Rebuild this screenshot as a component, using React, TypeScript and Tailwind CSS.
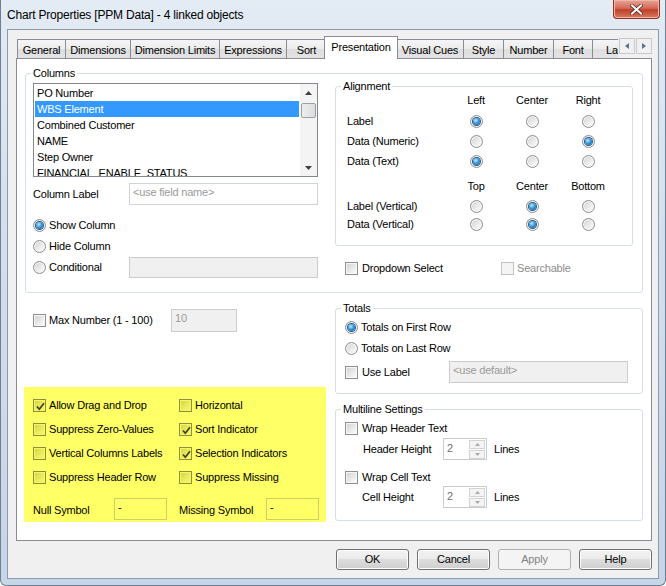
import React from "react";

type Tone = "plain" | "yellow" | "off";

function Radio({ on = false }: { on?: boolean }) {
  return (
    <span className="flex h-[13px] w-[13px] shrink-0 items-center justify-center rounded-full border border-[#8e8f8f] bg-[linear-gradient(135deg,#cfcfcf,#eeeeee_60%,#ffffff)] shadow-[inset_0_0_0_1px_#f6f6f6]">
      {on && (
        <span className="h-[7px] w-[7px] rounded-full bg-[radial-gradient(circle_at_40%_35%,#c4ecff,#3a9be0_45%,#0e4f8e)] shadow-[0_0_0_1px_#225a8a]" />
      )}
    </span>
  );
}

function Box({ on = false, tone = "plain" }: { on?: boolean; tone?: Tone }) {
  const look =
    tone === "yellow"
      ? "border-[#8f8f3e] bg-[linear-gradient(135deg,#d2d24e,#eded5c_60%,#fafa64)] shadow-[inset_0_0_0_1px_#f7f762]"
      : tone === "off"
      ? "border-[#c2c2c2] bg-[#f4f4f4]"
      : "border-[#8e8f8f] bg-[linear-gradient(135deg,#cfcfcf,#ececec_60%,#ffffff)] shadow-[inset_0_0_0_1px_#f6f6f6]";
  return (
    <span className={`relative flex h-[13px] w-[13px] shrink-0 items-center justify-center border ${look}`}>
      {on && (
        <svg width="11" height="11" viewBox="0 0 11 11" className="absolute left-px top-px">
          <path d="M2 5.5 L4.3 8.2 L9 2.2" fill="none" stroke={tone === "yellow" ? "#3e3e22" : "#4a5f7f"} strokeWidth="1.7" />
        </svg>
      )}
    </span>
  );
}

function Group({ title, className, children }: { title: string; className: string; children?: React.ReactNode }) {
  return (
    <fieldset className={`rounded-[3px] border border-[#d5dfe5] px-[5px] ${className}`}>
      <legend className="px-[2px] leading-[14px]">{title}</legend>
      {children}
    </fieldset>
  );
}

function Field({ w, text, hint = false, grey = false, yellow = false, h = "h-[22px]" }: { w: string; text?: string; hint?: boolean; grey?: boolean; yellow?: boolean; h?: string }) {
  const look = yellow ? "border-[#cfcf6a] bg-[#ffff66]" : grey ? "border-[#c9cdd2] bg-[#f0f0f0]" : "border-[#d0d4d9] bg-white";
  return (
    <div className={`${w} ${h} shrink-0 border ${look} pl-[3px] pt-[3px] ${hint || grey ? "text-[#9a9a9a]" : "text-black"}`}>
      {text}
    </div>
  );
}

function Spin() {
  return (
    <div className="flex h-[22px] w-[44px] shrink-0 border border-[#c9cdd2] bg-white">
      <span className="flex-1 pl-[3px] pt-[4px] text-[#707070]">2</span>
      <div className="mr-px mt-px flex w-[16px] flex-col gap-px">
        <span className="flex h-[9px] items-center justify-center border border-[#d4d4d4] bg-[#f4f4f4]">
          <svg width="5" height="3" viewBox="0 0 5 3"><path d="M0 3 L2.5 0 L5 3Z" fill="#a8a8a8" /></svg>
        </span>
        <span className="flex h-[9px] items-center justify-center border border-[#d4d4d4] bg-[#f4f4f4]">
          <svg width="5" height="3" viewBox="0 0 5 3"><path d="M0 0 L2.5 3 L5 0Z" fill="#a8a8a8" /></svg>
        </span>
      </div>
    </div>
  );
}

const tabs = [
  { label: "General", w: "w-[49px]" },
  { label: "Dimensions", w: "w-[66px]" },
  { label: "Dimension Limits", w: "w-[90px]" },
  { label: "Expressions", w: "w-[68px]" },
  { label: "Sort", w: "w-[41px]" },
  { label: "Presentation", w: "w-[74px]", active: true },
  { label: "Visual Cues", w: "w-[68px]" },
  { label: "Style", w: "w-[41px]" },
  { label: "Number", w: "w-[51px]" },
  { label: "Font", w: "w-[40px]" },
  { label: "Layout", w: "w-[60px]" },
];

const fields = ["PO Number", "WBS Element", "Combined Customer", "NAME", "Step Owner", "FINANCIAL_ENABLE_STATUS"];

const alignRows = [
  { label: "Label", pick: 0 },
  { label: "Data (Numeric)", pick: 2 },
  { label: "Data (Text)", pick: 0 },
];

const options = [
  ["Allow Drag and Drop", true, "Horizontal", false],
  ["Suppress Zero-Values", false, "Sort Indicator", true],
  ["Vertical Columns Labels", false, "Selection Indicators", true],
  ["Suppress Header Row", false, "Suppress Missing", false],
] as const;

export default function App() {
  return (
    <div className="flex h-[586px] w-[666px] flex-col overflow-hidden rounded-b-[6px] border-x border-b border-[#6f7e90] bg-[linear-gradient(180deg,#e3ebf4,#d3dfec_40%,#c6d5e7)] font-['Liberation_Sans',Arial,sans-serif] text-[11px] leading-none tracking-[-0.2px] text-black">
      {/* title bar */}
      <div className="flex h-[29px] shrink-0 items-start justify-between">
        <span className="pl-[6px] pt-[9px] text-[12px] tracking-[-0.2px]">Chart Properties [PPM Data] - 4 linked objects</span>
        <button className="mr-[5px] flex h-[19px] w-[47px] items-center justify-center rounded-b-[4px] border border-t-0 border-[#8b3326] bg-[linear-gradient(#e8a597,#d46b58_45%,#c0402c_55%,#d77a5e)] shadow-[inset_0_0_0_1px_#f0b7a8]">
          <svg width="13" height="11" viewBox="0 0 13 11">
            <path d="M2 1.5 L11 9.5 M11 1.5 L2 9.5" stroke="#5a2a22" strokeWidth="3.6" strokeLinecap="square" />
            <path d="M2 1.5 L11 9.5 M11 1.5 L2 9.5" stroke="#ffffff" strokeWidth="2" strokeLinecap="square" />
          </svg>
        </button>
      </div>

      {/* client area */}
      <div className="ml-[6px] flex h-[550px] w-[652px] flex-col border border-[#8b9bb0] bg-[#f0f0f0]">
        {/* tab strip */}
        <div className="mt-[6px] flex h-[22px] items-start">
          <div className="ml-[9px] flex h-[22px] w-[601px] items-end overflow-x-clip">
            {tabs.map((t) =>
              t.active ? (
                <div
                  key={t.label}
                  className={`${t.w} relative z-10 -mx-[2px] -mb-px flex h-[23px] shrink-0 justify-center border border-b-0 border-[#898c95] bg-white pt-[5px]`}
                >
                  {t.label}
                </div>
              ) : (
                <div
                  key={t.label}
                  className={`${t.w} flex h-[19px] shrink-0 justify-center border-l border-t border-r border-[#898c95] -mr-px bg-[linear-gradient(#f5f5f5,#ececec_50%,#dedede_50%,#e3e3e3)] pt-[5px]`}
                >
                  {t.label}
                </div>
              )
            )}
          </div>
          <div className="ml-px mt-[2px] flex gap-px">
            {["M4 0 L0 3 L4 6Z", "M0 0 L4 3 L0 6Z"].map((d) => (
              <span key={d} className="flex h-[16px] w-[16px] items-center justify-center border border-[#c6c9ce] bg-[#f0f0f0]">
                <svg width="4" height="6" viewBox="0 0 4 6"><path d={d} fill="#5d6f8a" /></svg>
              </span>
            ))}
          </div>
        </div>

        {/* tab page */}
        <div className="ml-[8px] h-[483px] w-[636px] border border-[#898c95] bg-white pl-[8px]">
          <Group title="Columns" className="mt-[7px] h-[227px] w-[618px]">
            <div className="flex">
              <div className="ml-[2px] w-[285px]">
                <div className="mt-[3px] flex h-[94px] w-[285px] border border-[#828790]">
                  <div className="flex-1 overflow-hidden p-px">
                    {fields.map((f) => (
                      <div
                        key={f}
                        className={`h-[16px] pl-[2px] leading-[16px] ${f === "WBS Element" ? "bg-[#3399ff] text-white" : ""}`}
                      >
                        {f}
                      </div>
                    ))}
                  </div>
                  <div className="flex w-[17px] flex-col items-center bg-[#f4f4f4]">
                    <span className="flex h-[17px] items-center">
                      <svg width="7" height="4" viewBox="0 0 7 4"><path d="M0 4 L3.5 0 L7 4Z" fill="#404040" /></svg>
                    </span>
                    <span className="mt-[2px] h-[15px] w-[15px] rounded-[2px] border border-[#9aa0a8] bg-[linear-gradient(90deg,#eeeeee,#dcdcdc)]" />
                    <span className="mt-auto flex h-[17px] items-center">
                      <svg width="7" height="4" viewBox="0 0 7 4"><path d="M0 0 L3.5 4 L7 0Z" fill="#404040" /></svg>
                    </span>
                  </div>
                </div>

                <div className="mt-[6px] flex h-[22px] items-center">
                  <span className="w-[96px]">Column Label</span>
                  <Field w="w-[189px]" text="<use field name>" hint />
                </div>

                <div className="mt-[10px] flex h-[21px] items-center gap-[3px]">
                  <Radio on />
                  <span>Show Column</span>
                </div>
                <div className="flex h-[21px] items-center gap-[3px]">
                  <Radio />
                  <span>Hide Column</span>
                </div>
                <div className="flex h-[21px] items-center">
                  <span className="flex w-[96px] items-center gap-[3px]">
                    <Radio />
                    <span>Conditional</span>
                  </span>
                  <Field w="w-[189px]" h="h-[21px]" grey />
                </div>
              </div>

              <div className="ml-[17px] w-[298px]">
                <Group title="Alignment" className="-mt-px h-[167px] w-[298px]">
                  <div className="grid h-[14px] grid-cols-[107px_56px_56px_56px] leading-[14px]">
                    <span />
                    <span className="text-center">Left</span>
                    <span className="text-center">Center</span>
                    <span className="text-center">Right</span>
                  </div>
                  <div className="mt-[4px]">
                    {alignRows.map((r) => (
                      <div key={r.label} className="grid h-[20px] grid-cols-[107px_56px_56px_56px] items-center">
                        <span className="pl-[6px]">{r.label}</span>
                        {[0, 1, 2].map((i) => (
                          <span key={i} className="flex justify-center">
                            <Radio on={r.pick === i} />
                          </span>
                        ))}
                      </div>
                    ))}
                  </div>
                  <div className="mt-[8px] grid h-[14px] grid-cols-[107px_56px_56px_56px] leading-[14px]">
                    <span />
                    <span className="text-center">Top</span>
                    <span className="text-center">Center</span>
                    <span className="text-center">Bottom</span>
                  </div>
                  <div className="mt-[4px] grid h-[19px] grid-cols-[107px_56px_56px_56px] items-center">
                    <span className="pl-[6px]">Label (Vertical)</span>
                    <span className="flex justify-center"><Radio /></span>
                    <span className="flex justify-center"><Radio on /></span>
                    <span className="flex justify-center"><Radio /></span>
                  </div>
                  <div className="grid h-[17px] grid-cols-[107px_56px_56px_56px] items-center">
                    <span className="pl-[6px]">Data (Vertical)</span>
                    <span className="flex justify-center"><Radio /></span>
                    <span className="flex justify-center"><Radio on /></span>
                    <span className="flex justify-center"><Radio /></span>
                  </div>
                </Group>

                <div className="mt-[14px] flex h-[17px] items-center pl-[10px]">
                  <span className="flex w-[156px] items-center gap-[4px]">
                    <Box />
                    <span>Dropdown Select</span>
                  </span>
                  <span className="flex items-center gap-[3px] text-[#8d8d8d]">
                    <Box tone="off" />
                    <span>Searchable</span>
                  </span>
                </div>
              </div>
            </div>
          </Group>

          <div className="mt-[8px] flex">
            {/* left column */}
            <div className="w-[310px]">
              <div className="mt-[8px] flex h-[23px] items-center pl-[8px]">
                <span className="flex w-[138px] items-center gap-[3px]">
                  <Box />
                  <span>Max Number (1 - 100)</span>
                </span>
                <Field w="w-[66px]" h="h-[23px]" text="10" grey />
              </div>

              <div className="-ml-px mt-[55px] h-[135px] w-[302px] bg-[#ffff66] pl-[9px] pt-[6px]">
                {options.map(([a, aOn, b, bOn]) => (
                  <div key={a} className="flex h-[24px] items-center">
                    <span className="flex w-[146px] items-center gap-[3px]">
                      <Box tone="yellow" on={aOn} />
                      <span>{a}</span>
                    </span>
                    <span className="flex items-center gap-[3px]">
                      <Box tone="yellow" on={bOn} />
                      <span>{b}</span>
                    </span>
                  </div>
                ))}
                <div className="mt-[9px] flex h-[22px] items-center">
                  <span className="w-[81px] pt-[3px]">Null Symbol</span>
                  <Field w="w-[53px]" text="-" yellow />
                  <span className="ml-[12px] w-[87px] pt-[3px]">Missing Symbol</span>
                  <Field w="w-[53px]" text="-" yellow />
                </div>
              </div>
            </div>

            {/* right column */}
            <div className="w-[308px]">
              <Group title="Totals" className="h-[93px] w-[308px]">
                <div className="mt-[2px] flex h-[21px] items-center gap-[3px] pl-[4px]">
                  <Radio on />
                  <span>Totals on First Row</span>
                </div>
                <div className="flex h-[21px] items-center gap-[3px] pl-[4px]">
                  <Radio />
                  <span>Totals on Last Row</span>
                </div>
                <div className="mt-[2px] flex h-[22px] items-center pl-[4px]">
                  <span className="flex w-[104px] items-center gap-[4px]">
                    <Box />
                    <span>Use Label</span>
                  </span>
                  <Field w="w-[179px]" text="<use default>" grey />
                </div>
              </Group>

              <Group title="Multiline Settings" className="mt-[8px] h-[119px] w-[308px]">
                <div className="mt-[4px] flex h-[17px] items-center gap-[4px] pl-[4px]">
                  <Box />
                  <span>Wrap Header Text</span>
                </div>
                <div className="mt-px flex h-[22px] items-center pl-[22px]">
                  <span className="w-[80px]">Header Height</span>
                  <Spin />
                  <span className="ml-[7px]">Lines</span>
                </div>
                <div className="mt-[9px] flex h-[17px] items-center gap-[4px] pl-[4px]">
                  <Box />
                  <span>Wrap Cell Text</span>
                </div>
                <div className="flex h-[22px] items-center pl-[21px]">
                  <span className="w-[81px]">Cell Height</span>
                  <Spin />
                  <span className="ml-[7px]">Lines</span>
                </div>
              </Group>
            </div>
          </div>
        </div>

        {/* dialog buttons */}
        <div className="mt-[8px] flex justify-end gap-[8px] pr-[6px]">
          {["OK", "Cancel", "Apply", "Help"].map((b) =>
            b === "Apply" ? (
              <button key={b} className="h-[21px] w-[73px] rounded-[3px] border border-[#adb2b5] bg-[#f4f4f4] text-[#838383]">
                {b}
              </button>
            ) : (
              <button
                key={b}
                className="h-[21px] w-[73px] rounded-[3px] border border-[#707070] bg-[linear-gradient(#f2f2f2,#ebebeb_50%,#dddddd_50%,#cfcfcf)] shadow-[inset_0_0_0_1px_#fcfcfc]"
              >
                {b}
              </button>
            )
          )}
        </div>
      </div>
    </div>
  );
}
